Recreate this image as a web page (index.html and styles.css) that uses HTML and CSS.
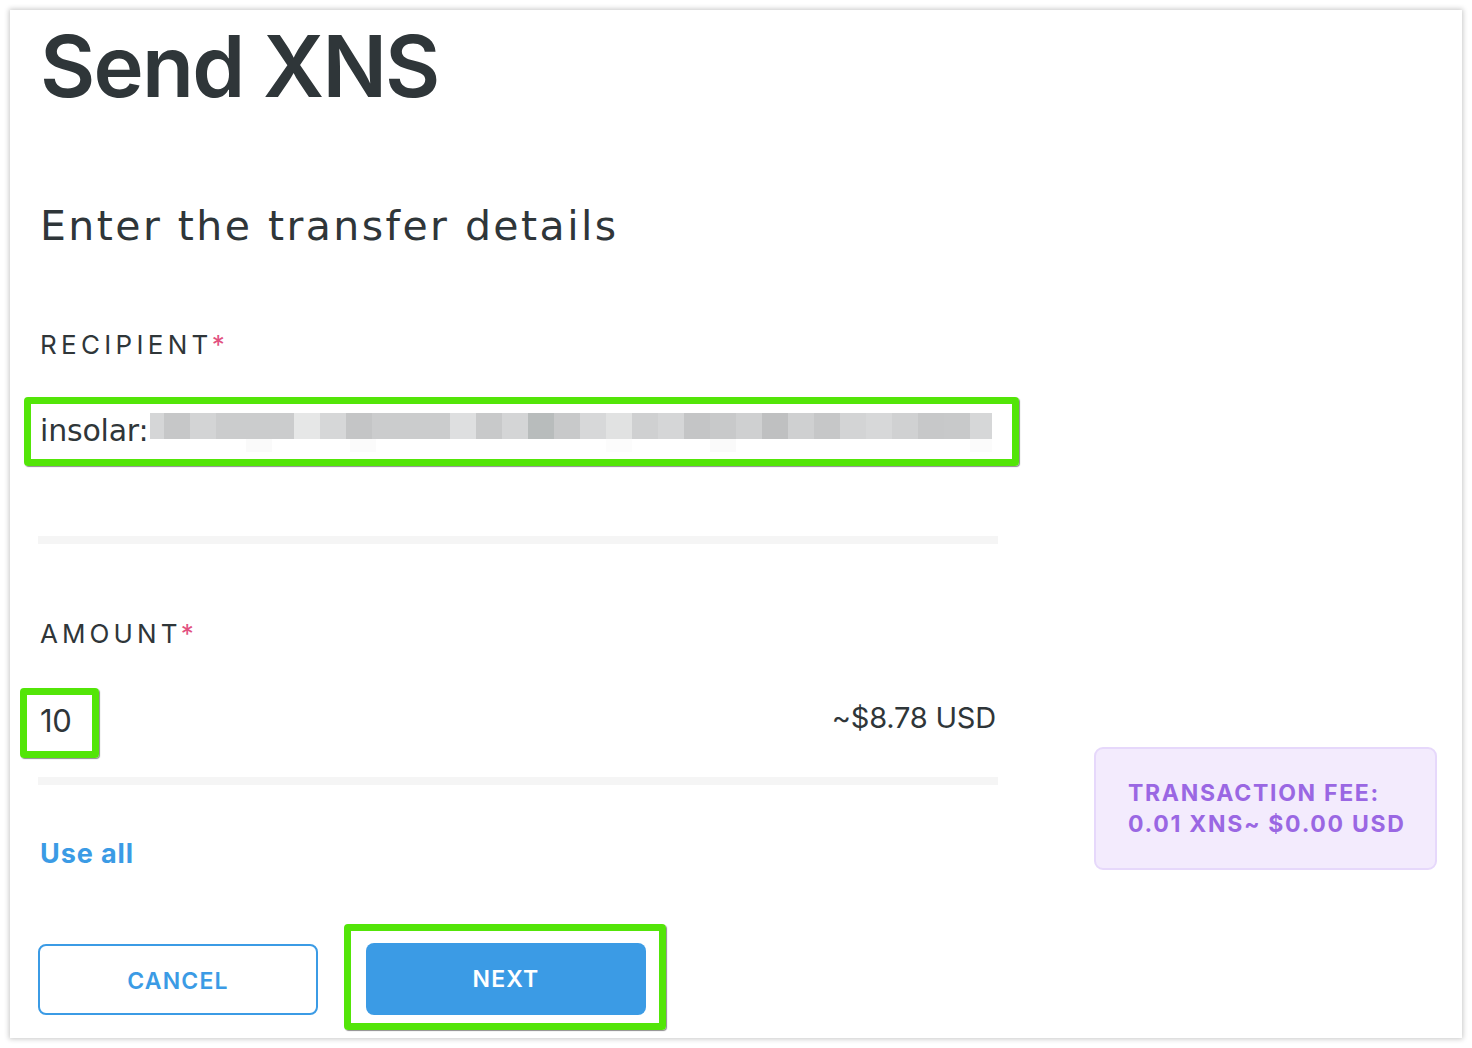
FILE: index.html
```html
<!DOCTYPE html>
<html lang="en">
<head>
<meta charset="utf-8">
<title>Send XNS</title>
<link rel="stylesheet" href="styles.css">
</head>
<body>
<div class="card">
  <h1 class="title">Send XNS</h1>
  <div class="layout">
    <div class="form">
      <h2 class="subtitle">Enter the transfer details</h2>

      <div class="field recipient">
        <div class="label">RECIPIENT<span class="req">*</span></div>
        <div class="input-row">
          <span class="value value-addr">insolar:</span><span class="blur"></span>
          <span class="mark mark-recipient"></span>
        </div>
        <div class="bar"></div>
      </div>

      <div class="field amount">
        <div class="label">AMOUNT<span class="req">*</span></div>
        <div class="input-row amount-row">
          <span class="value">10</span>
          <span class="usd">~$8.78 USD</span>
          <span class="mark mark-amount"></span>
        </div>
        <div class="bar"></div>
      </div>

      <a class="use-all">Use all</a>

      <div class="actions">
        <button class="btn btn-cancel">CANCEL</button>
        <div class="next-wrap">
          <button class="btn btn-next">NEXT</button>
          <span class="mark mark-next"></span>
        </div>
      </div>
    </div>
    <aside class="side">
      <div class="fee">TRANSACTION FEE:<br>0.01 XNS~ $0.00 USD</div>
    </aside>
  </div>
</div>
</body>
</html>
```

FILE: styles.css
```css
* { box-sizing: border-box; }
html, body { margin: 0; padding: 0; background: #ffffff; }
body {
  font-family: Inter, "DejaVu Sans", sans-serif;
  color: #2f3639;
}
.card {
  margin: 10px;
  width: 1452px;
  height: 1028px;
  background: #fff;
  box-shadow: 0 0 5px 1px rgba(0,0,0,0.22);
  padding: 14px 0 0 30px;
  overflow: hidden;
}
.title {
  margin: 0;
  font-size: 85px;
  line-height: 85px;
  font-weight: 600;
  letter-spacing: -1.8px;
  height: 85px;
}
.layout {
  display: flex;
  align-items: flex-start;
}
.form {
  width: 960px;
  margin-left: -2px;
  padding-left: 2px;
}
.subtitle {
  margin: 97px 0 0 0;
  font-family: "DejaVu Sans", sans-serif;
  font-size: 41px;
  line-height: 41px;
  font-weight: 400;
  letter-spacing: 2.45px;
  height: 41px;
}
.label {
  font-size: 26px;
  line-height: 27px;
  height: 27px;
  letter-spacing: 4.3px;
  font-weight: 400;
}
.amount .label { letter-spacing: 4.1px; }
.req { color: #e2517f; letter-spacing: 0; margin-left: -1px; }
.recipient { margin-top: 84px; }
.input-row {
  position: relative;
  display: flex;
  align-items: flex-start;
  font-size: 31px;
  line-height: 31px;
}
.recipient .input-row { margin-top: 57px; height: 121px; }
.value { letter-spacing: -0.3px; }
.value-addr {
  font-family: "DejaVu Sans", sans-serif;
  font-size: 30px;
  letter-spacing: -0.2px;
}
.blur {
  display: block;
  margin-top: -2px;
  margin-left: 2px;
  width: 842px;
  height: 39px;
  background:
    linear-gradient(to right,
      #d5d6d7 0 14px, #c6c7c8 14px 40px, #d3d4d5 40px 66px, #cbcccd 66px 144px,
      #e6e7e7 144px 170px, #d6d7d8 170px 196px, #c4c5c6 196px 222px, #cbcccd 222px 300px,
      #dedfe0 300px 326px, #c8c9ca 326px 352px, #d4d5d6 352px 378px, #b8bcbc 378px 404px,
      #c8c9ca 404px 430px, #d7d8d9 430px 456px, #e1e2e2 456px 482px, #cfd0d1 482px 508px,
      #d5d6d7 508px 534px, #c4c5c6 534px 560px, #c8c9ca 560px 586px, #cfd0d1 586px 612px,
      #bfc0c1 612px 638px, #cfd0d1 638px 664px, #c6c7c8 664px 690px, #d3d4d5 690px 716px,
      #d7d8d9 716px 742px, #d0d1d2 742px 768px, #c7c8c9 768px 794px, #c8c9ca 794px 820px,
      #d6d7d8 820px 842px) top / 842px 26px no-repeat,
    linear-gradient(to right,
      #ffffff 0 96px, #fafafa 96px 122px, #ffffff 122px 200px, #fbfbfb 200px 226px,
      #ffffff 226px 456px, #fcfcfc 456px 482px, #ffffff 482px 560px, #fafafa 560px 586px,
      #ffffff 586px 820px, #fbfbfb 820px 842px) bottom / 842px 13px no-repeat;
}
.bar {
  height: 8px;
  width: 960px;
  margin-left: -2px;
  background: #f5f5f5;
}
.mark {
  position: absolute;
  border: 7px solid #53e508;
  border-radius: 4px;
  box-shadow: 1px 1px 1px rgba(0,0,0,0.45);
  pointer-events: none;
}
.mark-recipient { left: -16px; top: -18px; width: 995px; height: 69px; }
.amount { margin-top: 76px; }
.amount-row { margin-top: 58px; height: 72px; justify-content: space-between; }
.usd { font-size: 29px; margin-top: -3px; margin-right: 2px; letter-spacing: -0.2px; }
.mark-amount { left: -20px; top: -17px; width: 79px; height: 70px; }
.use-all {
  display: block;
  margin-top: 55px;
  font-size: 27px;
  line-height: 27px;
  font-weight: 700;
  color: #3b9be5;
  letter-spacing: 0.9px;
}
.actions {
  display: flex;
  gap: 48px;
  margin-top: 77px;
  margin-left: -2px;
}
.btn {
  width: 280px;
  height: 71px;
  border-radius: 8px;
  font-family: Inter, "DejaVu Sans", sans-serif;
  font-size: 23px;
  font-weight: 600;
  letter-spacing: 1.2px;
  cursor: pointer;
  padding: 0;
}
.btn-cancel {
  background: #fff;
  border: 2px solid #3b9be5;
  color: #3b9be5;
  padding-top: 3px;
}
.btn-next {
  background: #3b9be5;
  border: none;
  color: #fff;
  margin-top: -1px;
  height: 72px;
}
.next-wrap { position: relative; }
.mark-next { left: -22px; top: -20px; width: 322px; height: 106px; }
.side {
  margin-left: 96px;
  margin-top: 638px;
}
.fee {
  width: 343px;
  height: 123px;
  background: #f3ebfd;
  border: 2px solid #e6d8fb;
  border-radius: 9px;
  color: #9a67e3;
  font-size: 23px;
  font-weight: 700;
  line-height: 31px;
  letter-spacing: 1.7px;
  padding: 29px 0 0 32px;
}
```
